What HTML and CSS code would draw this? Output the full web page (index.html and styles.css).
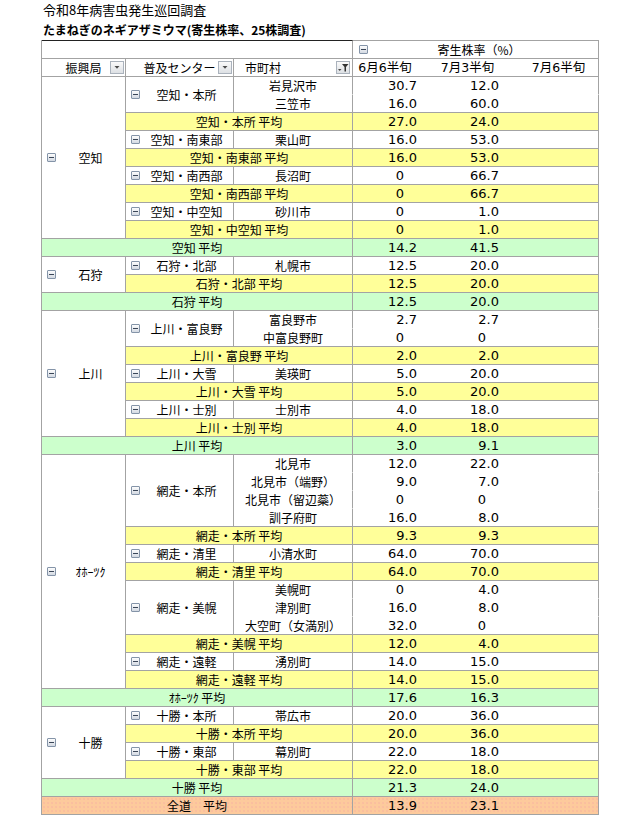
FILE: index.html
```html
<!DOCTYPE html>
<html lang="ja">
<head>
<meta charset="utf-8">
<title>令和8年病害虫発生巡回調査</title>
<link rel="stylesheet" href="styles.css">
</head>
<body>
<div class="page">
  <div class="t1">令和8年病害虫発生巡回調査</div>
  <div class="t2">たまねぎのネギアザミウマ(寄生株率、25株調査)</div>
  <table class="pv">
    <colgroup>
      <col class="w1"><col class="w2"><col class="w3"><col class="w4"><col class="w5"><col class="w6">
    </colgroup>
    <thead>
      <tr class="h0">
        <td colspan="3" class="blank"></td>
        <td colspan="3" class="grp"><div class="ic"><i class="tg"></i><span class="gt">寄生株率（%）</span></div></td>
      </tr>
      <tr class="h1">
        <td class="hd"><span>振興局</span><svg class="dd" width="14" height="13" viewBox="0 0 14 13"><defs><linearGradient id="bg1" x1="0" y1="0" x2="0" y2="1"><stop offset="0" stop-color="#fbfbfb"/><stop offset="1" stop-color="#dcdfe3"/></linearGradient></defs><rect x="0.5" y="0.5" width="13" height="12" fill="url(#bg1)" stroke="#aab2bc"/><polygon points="4.5,5 9.5,5 7,7.8" fill="#4a4a4a"/></svg></td>
        <td class="hd"><span>普及センター</span><svg class="dd" width="14" height="13" viewBox="0 0 14 13"><rect x="0.5" y="0.5" width="13" height="12" fill="url(#bg1)" stroke="#aab2bc"/><polygon points="4.5,5 9.5,5 7,7.8" fill="#4a4a4a"/></svg></td>
        <td class="hd hm"><span>市町村</span><svg class="dd" width="14" height="13" viewBox="0 0 14 13"><rect x="0.5" y="0.5" width="13" height="12" fill="url(#bg1)" stroke="#aab2bc"/><polygon points="2,8 5.5,8 3.75,10" fill="#4a4a4a"/><polygon points="6,3 12.5,3 10,6 10,10.5 8.5,10.5 8.5,6" fill="#333"/></svg></td>
        <td class="hq v1">6月6半旬</td>
        <td class="hq v2">7月3半旬</td>
        <td class="hq v3">7月6半旬</td>
      </tr>
    </thead>
    <tbody>
      <!-- 空知 -->
      <tr class="in">
        <td class="rg" rowspan="9"><div class="ic"><i class="tg"></i><span>空知</span></div></td>
        <td class="ct" rowspan="2"><div class="ic"><i class="tg"></i><span>空知・本所</span></div></td>
        <td class="mu">岩見沢市</td><td class="v v1">30.7</td><td class="v v2">12.0</td><td class="v v3"></td>
      </tr>
      <tr>
        <td class="mu">三笠市</td><td class="v v1">16.0</td><td class="v v2">60.0</td><td class="v v3"></td>
      </tr>
      <tr class="ya"><td colspan="2" class="lb">空知・本所 平均</td><td class="v v1">27.0</td><td class="v v2">24.0</td><td class="v v3"></td></tr>
      <tr>
        <td class="ct"><div class="ic"><i class="tg"></i><span>空知・南東部</span></div></td>
        <td class="mu">栗山町</td><td class="v v1">16.0</td><td class="v v2">53.0</td><td class="v v3"></td>
      </tr>
      <tr class="ya"><td colspan="2" class="lb">空知・南東部 平均</td><td class="v v1">16.0</td><td class="v v2">53.0</td><td class="v v3"></td></tr>
      <tr>
        <td class="ct"><div class="ic"><i class="tg"></i><span>空知・南西部</span></div></td>
        <td class="mu">長沼町</td><td class="v v1"><span class="z">0</span></td><td class="v v2">66.7</td><td class="v v3"></td>
      </tr>
      <tr class="ya"><td colspan="2" class="lb">空知・南西部 平均</td><td class="v v1"><span class="z">0</span></td><td class="v v2">66.7</td><td class="v v3"></td></tr>
      <tr>
        <td class="ct"><div class="ic"><i class="tg"></i><span>空知・中空知</span></div></td>
        <td class="mu">砂川市</td><td class="v v1"><span class="z">0</span></td><td class="v v2">1.0</td><td class="v v3"></td>
      </tr>
      <tr class="ya"><td colspan="2" class="lb">空知・中空知 平均</td><td class="v v1"><span class="z">0</span></td><td class="v v2">1.0</td><td class="v v3"></td></tr>
      <tr class="ga"><td colspan="3" class="lb">空知 平均</td><td class="v v1">14.2</td><td class="v v2">41.5</td><td class="v v3"></td></tr>

      <!-- 石狩 -->
      <tr>
        <td class="rg" rowspan="2"><div class="ic"><i class="tg"></i><span>石狩</span></div></td>
        <td class="ct"><div class="ic"><i class="tg"></i><span>石狩・北部</span></div></td>
        <td class="mu">札幌市</td><td class="v v1">12.5</td><td class="v v2">20.0</td><td class="v v3"></td>
      </tr>
      <tr class="ya"><td colspan="2" class="lb">石狩・北部 平均</td><td class="v v1">12.5</td><td class="v v2">20.0</td><td class="v v3"></td></tr>
      <tr class="ga"><td colspan="3" class="lb">石狩 平均</td><td class="v v1">12.5</td><td class="v v2">20.0</td><td class="v v3"></td></tr>

      <!-- 上川 -->
      <tr class="in">
        <td class="rg" rowspan="7"><div class="ic"><i class="tg"></i><span>上川</span></div></td>
        <td class="ct" rowspan="2"><div class="ic"><i class="tg"></i><span>上川・富良野</span></div></td>
        <td class="mu">富良野市</td><td class="v v1">2.7</td><td class="v v2">2.7</td><td class="v v3"></td>
      </tr>
      <tr>
        <td class="mu">中富良野町</td><td class="v v1"><span class="z">0</span></td><td class="v v2"><span class="z">0</span></td><td class="v v3"></td>
      </tr>
      <tr class="ya"><td colspan="2" class="lb">上川・富良野 平均</td><td class="v v1">2.0</td><td class="v v2">2.0</td><td class="v v3"></td></tr>
      <tr>
        <td class="ct"><div class="ic"><i class="tg"></i><span>上川・大雪</span></div></td>
        <td class="mu">美瑛町</td><td class="v v1">5.0</td><td class="v v2">20.0</td><td class="v v3"></td>
      </tr>
      <tr class="ya"><td colspan="2" class="lb">上川・大雪 平均</td><td class="v v1">5.0</td><td class="v v2">20.0</td><td class="v v3"></td></tr>
      <tr>
        <td class="ct"><div class="ic"><i class="tg"></i><span>上川・士別</span></div></td>
        <td class="mu">士別市</td><td class="v v1">4.0</td><td class="v v2">18.0</td><td class="v v3"></td>
      </tr>
      <tr class="ya"><td colspan="2" class="lb">上川・士別 平均</td><td class="v v1">4.0</td><td class="v v2">18.0</td><td class="v v3"></td></tr>
      <tr class="ga"><td colspan="3" class="lb">上川 平均</td><td class="v v1">3.0</td><td class="v v2">9.1</td><td class="v v3"></td></tr>

      <!-- オホーツク -->
      <tr class="in">
        <td class="rg" rowspan="13"><div class="ic"><i class="tg"></i><span>ｵﾎｰﾂｸ</span></div></td>
        <td class="ct" rowspan="4"><div class="ic"><i class="tg"></i><span>網走・本所</span></div></td>
        <td class="mu">北見市</td><td class="v v1">12.0</td><td class="v v2">22.0</td><td class="v v3"></td>
      </tr>
      <tr class="in"><td class="mu">北見市（端野）</td><td class="v v1">9.0</td><td class="v v2">7.0</td><td class="v v3"></td></tr>
      <tr class="in"><td class="mu">北見市（留辺蘂）</td><td class="v v1"><span class="z">0</span></td><td class="v v2"><span class="z">0</span></td><td class="v v3"></td></tr>
      <tr><td class="mu">訓子府町</td><td class="v v1">16.0</td><td class="v v2">8.0</td><td class="v v3"></td></tr>
      <tr class="ya"><td colspan="2" class="lb">網走・本所 平均</td><td class="v v1">9.3</td><td class="v v2">9.3</td><td class="v v3"></td></tr>
      <tr>
        <td class="ct"><div class="ic"><i class="tg"></i><span>網走・清里</span></div></td>
        <td class="mu">小清水町</td><td class="v v1">64.0</td><td class="v v2">70.0</td><td class="v v3"></td>
      </tr>
      <tr class="ya"><td colspan="2" class="lb">網走・清里 平均</td><td class="v v1">64.0</td><td class="v v2">70.0</td><td class="v v3"></td></tr>
      <tr class="in">
        <td class="ct" rowspan="3"><div class="ic"><i class="tg"></i><span>網走・美幌</span></div></td>
        <td class="mu">美幌町</td><td class="v v1"><span class="z">0</span></td><td class="v v2">4.0</td><td class="v v3"></td>
      </tr>
      <tr class="in"><td class="mu">津別町</td><td class="v v1">16.0</td><td class="v v2">8.0</td><td class="v v3"></td></tr>
      <tr><td class="mu">大空町（女満別）</td><td class="v v1">32.0</td><td class="v v2"><span class="z">0</span></td><td class="v v3"></td></tr>
      <tr class="ya"><td colspan="2" class="lb">網走・美幌 平均</td><td class="v v1">12.0</td><td class="v v2">4.0</td><td class="v v3"></td></tr>
      <tr>
        <td class="ct"><div class="ic"><i class="tg"></i><span>網走・遠軽</span></div></td>
        <td class="mu">湧別町</td><td class="v v1">14.0</td><td class="v v2">15.0</td><td class="v v3"></td>
      </tr>
      <tr class="ya"><td colspan="2" class="lb">網走・遠軽 平均</td><td class="v v1">14.0</td><td class="v v2">15.0</td><td class="v v3"></td></tr>
      <tr class="ga"><td colspan="3" class="lb">ｵﾎｰﾂｸ 平均</td><td class="v v1">17.6</td><td class="v v2">16.3</td><td class="v v3"></td></tr>

      <!-- 十勝 -->
      <tr>
        <td class="rg" rowspan="4"><div class="ic"><i class="tg"></i><span>十勝</span></div></td>
        <td class="ct"><div class="ic"><i class="tg"></i><span>十勝・本所</span></div></td>
        <td class="mu">帯広市</td><td class="v v1">20.0</td><td class="v v2">36.0</td><td class="v v3"></td>
      </tr>
      <tr class="ya"><td colspan="2" class="lb">十勝・本所 平均</td><td class="v v1">20.0</td><td class="v v2">36.0</td><td class="v v3"></td></tr>
      <tr>
        <td class="ct"><div class="ic"><i class="tg"></i><span>十勝・東部</span></div></td>
        <td class="mu">幕別町</td><td class="v v1">22.0</td><td class="v v2">18.0</td><td class="v v3"></td>
      </tr>
      <tr class="ya"><td colspan="2" class="lb">十勝・東部 平均</td><td class="v v1">22.0</td><td class="v v2">18.0</td><td class="v v3"></td></tr>
      <tr class="ga"><td colspan="3" class="lb">十勝 平均</td><td class="v v1">21.3</td><td class="v v2">24.0</td><td class="v v3"></td></tr>

      <tr class="oa"><td colspan="3" class="lb">全道　平均</td><td class="v v1">13.9</td><td class="v v2">23.1</td><td class="v v3"></td></tr>
    </tbody>
  </table>
</div>
</body>
</html>
```

FILE: styles.css
```css
html, body {
  margin: 0;
  padding: 0;
  background: #ffffff;
}

.page {
  padding-left: 41px;
  font-family: "Noto Sans CJK JP", sans-serif;
  color: #000;
}

.t1 {
  padding-left: 2px;
  height: 20px;
  line-height: 20px;
  font-size: 13px;
}

.t2 {
  padding-left: 2px;
  height: 20px;
  line-height: 20px;
  font-size: 12px;
  font-weight: bold;
}

.pv {
  table-layout: fixed;
  border-collapse: separate;
  border-spacing: 0;
  width: 558px;
  border-left: 1px solid #a3a3a3;
  font-size: 12px;
}

.w1 { width: 84px; }
.w2 { width: 108px; }
.w3 { width: 119px; }
.w4 { width: 83px; }
.w5 { width: 83px; }
.w6 { width: 80px; }

.pv td {
  box-sizing: border-box;
  padding: 0;
  border-right: 1px solid #a3a3a3;
  border-bottom: 1px solid #a3a3a3;
  line-height: 17px;
  white-space: nowrap;
  overflow: hidden;
  vertical-align: middle;
}

.pv tr {
  height: 18px;
}

.pv tr.h0 {
  height: 19px;
}

.pv td.v1,
.pv td.v2 {
  border-right: 0;
}

/* header */
.blank {
  border-top: 1px solid #222;
}

.grp {
  border-top: 1px solid #a3a3a3;
}

.grp .ic {
  padding-left: 6px;
}

.gt {
  padding-right: 8px;
}

.hd {
  position: relative;
  text-align: center;
}

.hd.hm {
  text-align: left;
  padding-left: 11px !important;
}

.dd {
  position: absolute;
  right: 1px;
  top: 2px;
  display: block;
}

.hm .dd {
  right: 2px;
}

.hq {
  text-align: center;
  font-family: "DejaVu Sans", "Noto Sans CJK JP", sans-serif;
  font-size: 12.5px;
}

/* toggle icon ⊟ */
.tg {
  display: inline-block;
  flex: none;
  position: relative;
  width: 9px;
  height: 9px;
  box-sizing: border-box;
  border: 1px solid #8494a8;
  border-radius: 1px;
  background: linear-gradient(#fdfdfd, #d3d9e2);
}

.tg::after {
  content: "";
  position: absolute;
  left: 1px;
  right: 1px;
  top: 3px;
  height: 1px;
  background: #3a4658;
}

.ic {
  display: flex;
  align-items: center;
  padding-left: 5px;
}

.ic span {
  flex: 1;
  text-align: center;
}

.rg,
.ct {
  background: #fff;
}

.mu {
  text-align: center;
}

/* values */
.v {
  font-family: "DejaVu Sans", sans-serif;
  font-size: 13px;
  text-align: right;
}

.v1 { padding-right: 19px !important; }
.v2 { padding-right: 20px !important; }

.z {
  padding-right: 13px;
}

/* inner rows of a group: no horizontal rule */
.pv tr.in td.mu,
.pv tr.in td.v {
  border-bottom-color: transparent;
}

/* subtotal rows */
.lb {
  text-align: center;
}

.ya td {
  background: #ffff99;
}

.ga td {
  background: #ccffcc;
}

.oa td {
  background-color: #fdca9c;
  background-image: radial-gradient(circle, #f6b0a0 0.6px, transparent 0.8px);
  background-size: 4px 4px;
}
```
